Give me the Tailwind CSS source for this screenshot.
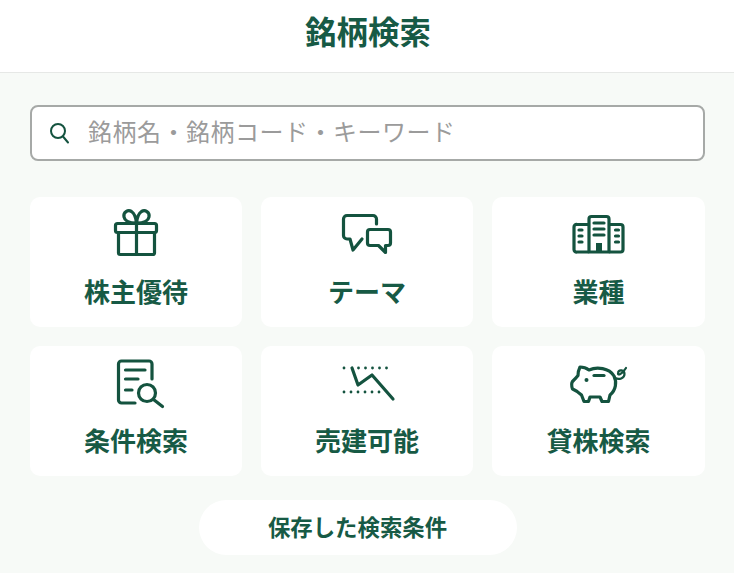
<!DOCTYPE html>
<html lang="ja">
<head>
    <meta charset="UTF-8">
    <meta name="viewport" content="width=device-width, initial-scale=1.0">
    <title>銘柄検索</title>
    <script src="https://cdn.jsdelivr.net/npm/@tailwindcss/browser@4"></script>
</head>
<body class="bg-[#f7faf7] h-[573px] overflow-hidden font-['Noto_Sans_CJK_JP',sans-serif] text-[#175a45]">

    <header class="bg-white h-[73px] border-b border-[#e6e8e6] flex items-center justify-center">
        <h1 class="text-[31.5px] font-bold leading-none pb-[11px] pl-[2px]">銘柄検索</h1>
    </header>

    <main class="px-[30px] pt-[32px]">
        <div class="bg-white h-[56px] w-[675px] border-2 border-[#a6a9a7] rounded-[8px] flex items-center pl-[14px] gap-[18px]">
            <svg class="w-[24px] h-[24px] shrink-0" viewBox="0 0 24 24" fill="none" stroke="#14533f" stroke-width="2" stroke-linecap="round">
                <circle cx="12" cy="10" r="7"/>
                <path d="M17 15.5 22 21.5"/>
            </svg>
            <input type="text" placeholder="銘柄名・銘柄コード・キーワード" class="flex-1 min-w-0 text-[24px] tracking-[0.5px] pb-[4px] outline-none placeholder:text-[#9b9b9b]">
        </div>

        <div class="grid grid-cols-[212px_212px_213px] gap-[19px] mt-[36px]">
            <a class="bg-white rounded-[10px] h-[130px] flex flex-col items-center pt-[11px]">
                <svg class="w-[60px] h-[48px] overflow-visible" viewBox="0 0 60 48" fill="none" stroke="#14533f" stroke-width="3.2" stroke-linecap="round" stroke-linejoin="round">
                    <rect x="9.5" y="15.5" width="41" height="9" rx="2"/>
                    <path d="M12.5 24.5V45a1.5 1.5 0 0 0 1.500 1.500H47a1.500 1.500 0 0 0 1.500-1.500V24.500"/>
                    <path d="M30.500 15.500V46"/>
                    <path d="M30 15C26 15 19 14 18 9 17 4 22 1.500 25.500 3.500 28.500 5.500 30 10 30.500 15 31 10 32.500 5.500 35.500 3.500 39 1.500 44 4 43 9 42 14 35 15 31 15"/>
                </svg>
                <span class="text-[26px] font-bold leading-none mt-[22px]">株主優待</span>
            </a>
            <a class="bg-white rounded-[10px] h-[130px] flex flex-col items-center pt-[11px]">
                <svg class="w-[60px] h-[48px] overflow-visible" viewBox="0 0 60 48" fill="none" stroke="#14533f" stroke-width="3.2" stroke-linecap="round" stroke-linejoin="round">
                    <path d="M39.500 16V11a3.500 3.500 0 0 0-3.500-3.500H10A3.500 3.500 0 0 0 6.500 11V27.500A3.500 3.500 0 0 0 10 31H13L16 42 25 31"/>
                    <path d="M33 21.500H51a2.500 2.500 0 0 1 2.500 2.500V35a2.500 2.500 0 0 1-2.500 2.500H48.500V44.500L41.500 37.500H33A2.500 2.500 0 0 1 30.500 35V24A2.500 2.500 0 0 1 33 21.500Z"/>
                </svg>
                <span class="text-[26px] font-bold leading-none mt-[22px]">テーマ</span>
            </a>
            <a class="bg-white rounded-[10px] h-[130px] flex flex-col items-center pt-[11px]">
                <svg class="w-[60px] h-[48px] overflow-visible" viewBox="0 0 60 48" fill="none" stroke="#14533f" stroke-width="3.2" stroke-linecap="round" stroke-linejoin="round">
                    <path d="M20 44V11a2.500 2.500 0 0 1 2.500-2.500H37.500A2.500 2.500 0 0 1 40 11V44Z"/>
                    <path d="M19 16.500H8A2.500 2.500 0 0 0 5 19V41.500A2.500 2.500 0 0 0 8 44H19"/>
                    <path d="M41 16.500H51.500A2.500 2.500 0 0 1 54 19V41.500A2.500 2.500 0 0 1 51.500 44H41"/>
                    <path d="M25 15H35M25 21H35M25 27H35M10 22H13M10 28H13M10 34H13M46.500 22H49.500M46.500 28H49.500M46.500 34H49.500"/>
                    <rect x="27" y="35" width="6" height="9" fill="#14533f" stroke="none"/>
                </svg>
                <span class="text-[26px] font-bold leading-none mt-[22px]">業種</span>
            </a>
            <a class="bg-white rounded-[10px] h-[130px] flex flex-col items-center pt-[11px]">
                <svg class="w-[60px] h-[48px] overflow-visible" viewBox="0 0 60 48" fill="none" stroke="#14533f" stroke-width="3.2" stroke-linecap="round" stroke-linejoin="round">
                    <path d="M46 22V7a3 3 0 0 0-3-3H15.500a3 3 0 0 0-3 3V43a3 3 0 0 0 3 3H29"/>
                    <path d="M19.500 13H39M19.500 22H32M19.500 33H26"/>
                    <circle cx="41" cy="36" r="8.500"/>
                    <path d="M47.500 42.500 56.500 49.500"/>
                </svg>
                <span class="text-[26px] font-bold leading-none mt-[22px]">条件検索</span>
            </a>
            <a class="bg-white rounded-[10px] h-[130px] flex flex-col items-center pt-[11px]">
                <svg class="w-[60px] h-[48px] overflow-visible" viewBox="0 0 60 48" fill="none" stroke="#14533f" stroke-width="3.2" stroke-linecap="round" stroke-linejoin="round">
                    <path d="M7 11h.01M21.500 11h.01M28.500 11h.01M35.500 11h.01M42.500 11h.01M49.500 11h.01M7 35h.01M14 35h.01M21 35h.01M28 35h.01M35 35h.01M42 35h.01" stroke-width="2.800"/>
                    <path d="M15 11 21 28 35 18 56 42"/>
                </svg>
                <span class="text-[26px] font-bold leading-none mt-[22px]">売建可能</span>
            </a>
            <a class="bg-white rounded-[10px] h-[130px] flex flex-col items-center pt-[11px]">
                <svg class="w-[60px] h-[48px] overflow-visible" viewBox="0 0 60 48" fill="none" stroke="#14533f" stroke-width="3.2" stroke-linecap="round" stroke-linejoin="round">
                    <path d="M11 10C14 10 18 11.500 20 13 28 9.500 40 11 45 19 48 25 47 33 41 38L39.500 44.500H33L31 40H21L19.500 44.500H15L12.500 38C9 35 6 33 3.500 32 2.500 29 2.500 26 3.500 24.500 5 23 7 21 9 18.500 9 15 10 12 11 10Z"/>
                    <path d="M25 18.500H35"/>
                    <path d="M46 21C50 23 55.500 21.500 55.500 17 55.500 12.500 49.500 12 49 16 48.500 19 53 17.500 57 11" stroke-width="2.200"/>
                    <circle cx="17.500" cy="23" r="2" fill="#14533f" stroke="none"/>
                </svg>
                <span class="text-[26px] font-bold leading-none mt-[22px]">貸株検索</span>
            </a>
        </div>

        <div class="flex mt-[24px] pl-[169px]">
            <button class="bg-white rounded-full w-[318px] h-[55px] text-[22.400px] font-bold leading-none pb-[3px] pr-[1px]">保存した検索条件</button>
        </div>
    </main>

</body>
</html>
